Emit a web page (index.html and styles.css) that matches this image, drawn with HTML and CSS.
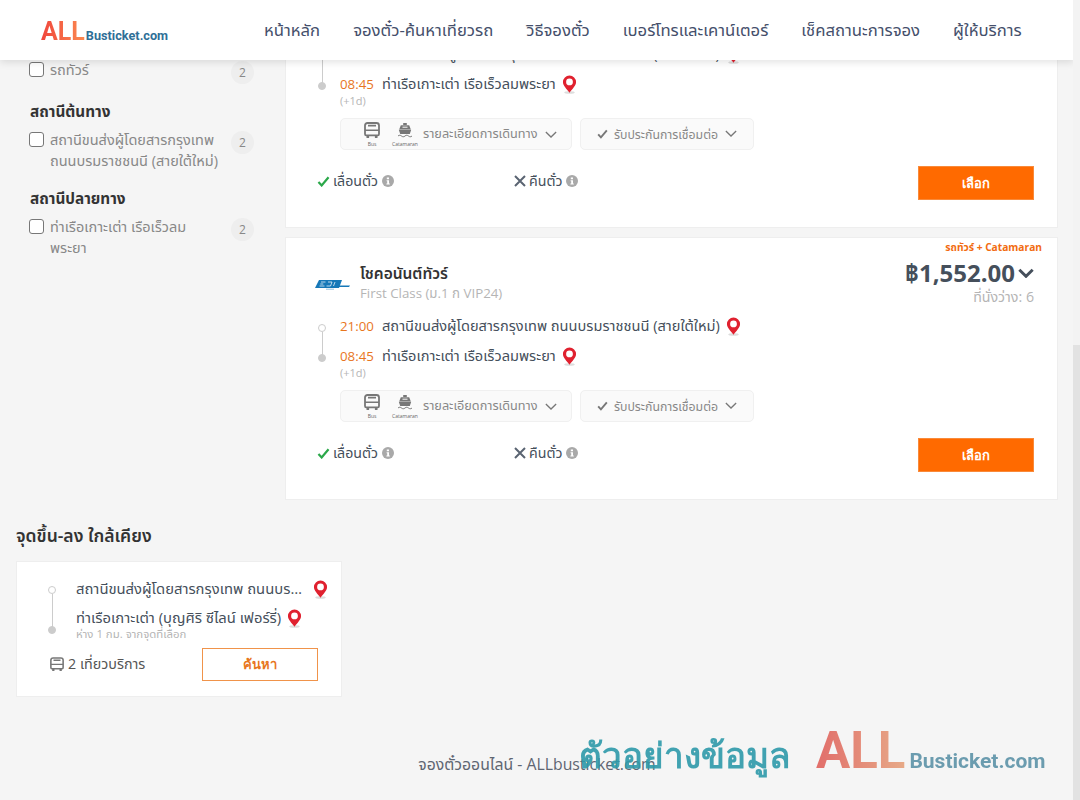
FILE: index.html
```html
<!DOCTYPE html>
<html lang="th">
<head>
<meta charset="utf-8">
<title>ALLBusticket</title>
<link rel="stylesheet" href="styles.css">
</head>
<body>
<svg class="defs" width="0" height="0">
  <symbol id="pin" viewBox="0 0 14 18">
    <ellipse cx="7" cy="16.6" rx="5" ry="1.2" fill="#ddd"/>
    <path d="M7 .5a6.2 6.2 0 0 0-6.2 6.2c0 3.6 3.6 6.6 6.2 10 2.6-3.4 6.2-6.4 6.2-10A6.2 6.2 0 0 0 7 .5z" fill="#e0212f"/>
    <circle cx="7" cy="6.6" r="3.2" fill="#fff"/>
  </symbol>
  <symbol id="bus" viewBox="0 0 16 17">
    <path d="M3.5 1h9C14 1 15 2 15 3.5V12c0 .8-.5 1.300-1.200 1.300H2.200C1.500 13.300 1 12.800 1 12V3.500C1 2 2 1 3.500 1z" fill="none" stroke="currentColor" stroke-width="1.800"/>
    <path d="M1 8.300h14M4 3.600h8" stroke="currentColor" stroke-width="1.600" fill="none"/>
    <path d="M2.500 13.300h2.600V16H2.500zM10.900 13.300h2.600V16h-2.600z" fill="currentColor"/>
  </symbol>
  <symbol id="boat" viewBox="0 0 16 17">
    <path d="M6.200 1h3.600v2H6.200z" fill="currentColor"/>
    <path d="M3.800 3.200h8.400l1.600 4.200H2.200z" fill="currentColor"/>
    <path d="M1.800 7.800h12.400l-1.400 4.200H3.200z" fill="currentColor"/>
    <path d="M5.500 5.200h5" stroke="#fafafa" stroke-width="1"/>
    <path d="M1 14c1.200-1 2.300-1 3.500 0s2.300 1 3.500 0 2.300-1 3.500 0 2.300 1 3.500 0" fill="none" stroke="currentColor" stroke-width="1"/>
  </symbol>
  <symbol id="chev" viewBox="0 0 14 8">
    <path d="M1 1l6 6 6-6" fill="none" stroke="currentColor" stroke-width="1.500"/>
  </symbol>
  <symbol id="chevb" viewBox="0 0 14 9">
    <path d="M1 1.500l6 6 6-6" fill="none" stroke="currentColor" stroke-width="2.600"/>
  </symbol>
  <symbol id="check" viewBox="0 0 14 12">
    <path d="M1.500 6.500l3.500 3.800 7.500-9" fill="none" stroke="currentColor" stroke-width="2.400"/>
  </symbol>
  <symbol id="cross" viewBox="0 0 12 12">
    <path d="M1 1l10 10M11 1L1 11" fill="none" stroke="currentColor" stroke-width="2"/>
  </symbol>
  <symbol id="info" viewBox="0 0 12 12">
    <circle cx="6" cy="6" r="6" fill="#a9a9a9"/>
    <path d="M4.800 2.500h2.200v1.800H4.800zM4.600 5.200h2.400v3.300h.8v1H4.400v-1h.8V6.200h-.6z" fill="#fff"/>
  </symbol>
  <symbol id="oper" viewBox="0 0 36 12">
    <path d="M5 1h23l-3 8H1z" fill="#1678b8"/>
    <path d="M7 3h4.500M6.300 5h3M5.500 7h5M14 3h4l-1.500 4h-4M21 3l-1.500 4" fill="none" stroke="#fff" stroke-width=".7"/>
    <path d="M25 6.500h11l-1 1.500H24.500z" fill="#1678b8"/>
    <path d="M12 10.200h8" stroke="#7fb4d6" stroke-width=".8"/>
  </symbol>
</svg>

<header class="topbar">
  <a class="logo"><span class="logo-all">ALL</span><span class="logo-rest">Busticket.com</span></a>
  <nav class="nav">
    <a>หน้าหลัก</a>
    <a>จองตั๋ว-ค้นหาเที่ยวรถ</a>
    <a>วิธีจองตั๋ว</a>
    <a>เบอร์โทรและเคาน์เตอร์</a>
    <a>เช็คสถานะการจอง</a>
    <a>ผู้ให้บริการ</a>
  </nav>
</header>

<div class="scrollbar"><div class="thumb"></div></div>

<main class="page">
  <div class="columns">
    <aside class="filters">
      <label class="filter"><span class="box"></span><span class="flabel">รถทัวร์</span><span class="count">2</span></label>
      <h4 class="ftitle">สถานีต้นทาง</h4>
      <label class="filter"><span class="box"></span><span class="flabel">สถานีขนส่งผู้โดยสารกรุงเทพ ถนนบรมราชชนนี (สายใต้ใหม่)</span><span class="count">2</span></label>
      <h4 class="ftitle">สถานีปลายทาง</h4>
      <label class="filter"><span class="box"></span><span class="flabel">ท่าเรือเกาะเต่า เรือเร็วลมพระยา</span><span class="count">2</span></label>
    </aside>

    <section class="results">
      <article class="card">
        <div class="tag">รถทัวร์ + Catamaran</div>
        <div class="card-head">
          <svg class="oplogo"><use href="#oper"/></svg>
          <div class="op"><div class="opname">โชคอนันต์ทัวร์</div><div class="opclass">First Class (ม.1 ก VIP24)</div></div>
          <div class="pricebox"><div class="price">฿1,552.00<svg class="pchev"><use href="#chevb"/></svg></div><div class="seats">ที่นั่งว่าง: 6</div></div>
        </div>
        <div class="route">
          <div class="stop"><span class="dot"></span><span class="time">21:00</span><span class="place">สถานีขนส่งผู้โดยสารกรุงเทพ ถนนบรมราชชนนี (สายใต้ใหม่)</span><svg class="pin"><use href="#pin"/></svg></div>
          <div class="stop last"><span class="dot full"></span><span class="time">08:45</span><span class="place">ท่าเรือเกาะเต่า เรือเร็วลมพระยา</span><svg class="pin"><use href="#pin"/></svg></div>
          <div class="nextday">(+1d)</div>
        </div>
        <div class="pills">
          <div class="pill wide">
            <span class="mode"><svg class="micon"><use href="#bus"/></svg><small>Bus</small></span>
            <span class="mode"><svg class="micon"><use href="#boat"/></svg><small>Catamaran</small></span>
            <span class="ptext">รายละเอียดการเดินทาง</span><svg class="chev"><use href="#chev"/></svg>
          </div>
          <div class="pill"><svg class="pcheck"><use href="#check"/></svg><span class="ptext low">รับประกันการเชื่อมต่อ</span><svg class="chev up"><use href="#chev"/></svg></div>
        </div>
        <div class="card-foot">
          <div class="policy"><svg class="yes"><use href="#check"/></svg>เลื่อนตั๋ว<svg class="info"><use href="#info"/></svg></div>
          <div class="policy"><svg class="no"><use href="#cross"/></svg>คืนตั๋ว<svg class="info"><use href="#info"/></svg></div>
          <button class="select">เลือก</button>
        </div>
      </article>

      <article class="card">
        <div class="tag">รถทัวร์ + Catamaran</div>
        <div class="card-head">
          <svg class="oplogo"><use href="#oper"/></svg>
          <div class="op"><div class="opname">โชคอนันต์ทัวร์</div><div class="opclass">First Class (ม.1 ก VIP24)</div></div>
          <div class="pricebox"><div class="price">฿1,552.00<svg class="pchev"><use href="#chevb"/></svg></div><div class="seats">ที่นั่งว่าง: 6</div></div>
        </div>
        <div class="route">
          <div class="stop"><span class="dot"></span><span class="time">21:00</span><span class="place">สถานีขนส่งผู้โดยสารกรุงเทพ ถนนบรมราชชนนี (สายใต้ใหม่)</span><svg class="pin"><use href="#pin"/></svg></div>
          <div class="stop last"><span class="dot full"></span><span class="time">08:45</span><span class="place">ท่าเรือเกาะเต่า เรือเร็วลมพระยา</span><svg class="pin"><use href="#pin"/></svg></div>
          <div class="nextday">(+1d)</div>
        </div>
        <div class="pills">
          <div class="pill wide">
            <span class="mode"><svg class="micon"><use href="#bus"/></svg><small>Bus</small></span>
            <span class="mode"><svg class="micon"><use href="#boat"/></svg><small>Catamaran</small></span>
            <span class="ptext">รายละเอียดการเดินทาง</span><svg class="chev"><use href="#chev"/></svg>
          </div>
          <div class="pill"><svg class="pcheck"><use href="#check"/></svg><span class="ptext low">รับประกันการเชื่อมต่อ</span><svg class="chev up"><use href="#chev"/></svg></div>
        </div>
        <div class="card-foot">
          <div class="policy"><svg class="yes"><use href="#check"/></svg>เลื่อนตั๋ว<svg class="info"><use href="#info"/></svg></div>
          <div class="policy"><svg class="no"><use href="#cross"/></svg>คืนตั๋ว<svg class="info"><use href="#info"/></svg></div>
          <button class="select">เลือก</button>
        </div>
      </article>
    </section>
  </div>

  <section class="nearby">
    <h3 class="nearby-title">จุดขึ้น-ลง ใกล้เคียง</h3>
    <div class="ncard">
      <div class="nroute">
        <div class="nstop"><span class="dot"></span><span class="nplace clip">สถานีขนส่งผู้โดยสารกรุงเทพ ถนนบรมราชชนนี (สายใต้ใหม่)</span><svg class="pin"><use href="#pin"/></svg></div>
        <div class="nstop lastn"><span class="dot full"></span><span class="nplace">ท่าเรือเกาะเต่า (บุญศิริ ซีไลน์ เฟอร์รี่)</span><svg class="pin"><use href="#pin"/></svg></div>
        <div class="ndist">ห่าง 1 กม. จากจุดที่เลือก</div>
      </div>
      <div class="nfoot">
        <span class="trips"><svg class="tbus"><use href="#bus"/></svg>2 เที่ยวบริการ</span>
        <button class="search">ค้นหา</button>
      </div>
    </div>
  </section>

  <footer class="foot">จองตั๋วออนไลน์ - ALLbusticket.com</footer>
</main>

<div class="watermark"><span class="wm-text">ตัวอย่างข้อมูล</span><span class="wm-all">ALL</span><span class="wm-rest">Busticket.com</span></div>
</body>
</html>
```

FILE: styles.css
```css
* { box-sizing: border-box; }
html, body { margin: 0; height: 800px; overflow: hidden; }
body {
  background: #f5f5f5;
  font-family: "Open Sans", "Noto Sans", "Noto Sans Thai", "DejaVu Sans", sans-serif;
  font-size: 14px;
  color: #454f5b;
  position: relative;
}
.defs { position: absolute; }

.topbar {
  position: absolute; top: 0; left: 0; z-index: 5;
  width: 1074px; height: 60px;
  background: #fff;
  box-shadow: 0 2px 8px rgba(0,0,0,.12);
  display: flex; align-items: center;
  padding: 1px 0 0 41px;
}
.logo { display: flex; align-items: baseline; width: 223px; font-family: Roboto, sans-serif; font-weight: 700; position: relative; top: 1px; }
.logo-all { font-size: 25px; background: linear-gradient(90deg, #f0463c, #fb8a50); -webkit-background-clip: text; background-clip: text; color: transparent; }
.logo-rest { font-size: 12.700px; margin-left: 1px; color: #2f6f97; }
.nav { display: flex; gap: 33px; font-size: 16.700px; color: #454f6b; }

.scrollbar { position: absolute; top: 0; right: 0; width: 7px; height: 800px; background: #f3f3f3; z-index: 6; }
.thumb { margin-top: 345px; height: 455px; background: #e2e2e2; }

.page { margin-top: -35px; }
.columns { display: flex; align-items: flex-start; height: 535px; }

.filters { width: 285px; padding: 96px 31px 0 29px; }
.filter { display: flex; align-items: flex-start; margin-bottom: 13px; }
.box { flex: none; width: 15px; height: 15px; border: 1.500px solid #777; border-radius: 3px; margin-top: 1px; background: #fff; }
.flabel { flex: none; width: 172px; margin: -2px 9px 0 6px; font-size: 14.500px; line-height: 21px; color: #888; }
.count { flex: none; width: 23px; height: 23px; border-radius: 50%; background: #eee; font-size: 12px; text-align: center; line-height: 23px; color: #888; }
.ftitle { margin: 17px 0 10px 1px; font-size: 15.300px; line-height: 20px; font-weight: 700; color: #333; }

.results { width: 773px; display: flex; flex-direction: column; gap: 9px; }
.card { position: relative; height: 263px; background: #fff; border: 1px solid #eee; padding: 0 23px 0 28px; }
.tag { position: absolute; top: 2px; right: 15px; font-size: 10.200px; font-weight: 700; color: #f26b10; line-height: 14px; }

.card-head { display: flex; align-items: center; height: 48px; margin-top: 21px; }
.oplogo { width: 36px; height: 12px; flex: none; margin-top: 4px; }
.op { margin-left: 10px; flex: 1; }
.opname { font-size: 15.500px; font-weight: 600; color: #333; line-height: 20px; }
.opclass { font-size: 13.300px; color: #b5b5b5; line-height: 20px; }
.pricebox { text-align: right; position: relative; top: -2px; }
.price { font-size: 24px; font-weight: 700; color: #454f5b; line-height: 32px; display: flex; align-items: center; }
.pchev { width: 16px; height: 10px; margin-left: 3px; color: #454f5b; }
.seats { font-size: 14.200px; color: #b5b5b5; line-height: 16px; }

.route { margin-top: 4px; }
.stop { display: flex; align-items: center; height: 30px; position: relative; padding-left: 26px; }
.dot { position: absolute; left: 4px; top: 13px; width: 8px; height: 8px; border-radius: 50%; background: #fff; border: 1px solid #ccc; z-index: 1; }
.dot.full { background: #ccc; }
.stop:not(.last) .dot::after { content: ""; position: absolute; left: 2.500px; top: 7px; width: 1px; height: 24px; background: #ccc; }
.time { color: #e8761e; font-size: 13.300px; width: 42px; }
.place { font-size: 14.600px; color: #454f5b; }
.pin { width: 15px; height: 19px; margin-left: 6px; flex: none; }
.nextday { font-size: 11px; color: #b5b5b5; padding-left: 26px; line-height: 14px; margin-top: -5px; }

.pills { display: flex; gap: 8px; margin: 10px 0 0 26px; }
.pill { display: flex; align-items: center; height: 32px; width: 174px; background: #fafafa; border: 1px solid #f0f0f0; border-radius: 5px; padding-left: 16px; color: #777; }
.pill.wide { width: 232px; padding-left: 16px; }
.mode { display: flex; flex-direction: column; align-items: center; width: 30px; line-height: 6px; }
.mode + .mode { margin-left: 3px; margin-right: 3px; }
.micon { width: 16px; height: 17px; color: #777; }
.mode small { font-size: 5px; color: #666; white-space: nowrap; margin-top: 2px; }
.ptext { font-size: 12.700px; color: #888; }
.ptext.low { position: relative; top: 1px; margin-left: 6px; font-size: 12.300px; }
.chev { width: 12px; height: 7px; margin-left: 7px; color: #777; }
.chev.up { position: relative; top: -1px; }
.pcheck { width: 11px; height: 10px; color: #777; }

.card-foot { display: flex; align-items: center; margin: 16px 0 0 3px; }
.policy { display: flex; align-items: center; font-size: 14.200px; color: #454f5b; width: 197px; margin-bottom: 4px; }
.yes { width: 13px; height: 11px; color: #2ba84a; margin-right: 3px; }
.no { width: 12px; height: 12px; color: #5a6472; margin-right: 3px; }
.info { width: 12px; height: 12px; margin-left: 4px; }
.select { margin-left: auto; width: 116px; height: 34px; background: #ff6a00; color: #fff; border: 1px solid #f98a3a; font: 600 13px "Open Sans", "Noto Sans", sans-serif; }

.nearby { padding: 23px 0 0 16px; }
.nearby-title { margin: 0; font-size: 17.500px; font-weight: 600; line-height: 24px; color: #333; }
.ncard { width: 326px; height: 136px; margin-top: 14px; background: #fff; border: 1px solid #eee; padding: 13px 23px 0 31px; }
.nroute { position: relative; margin-right: -9px; }
.nstop { display: flex; align-items: center; height: 29px; padding-left: 28px; position: relative; }
.nstop .dot { left: 0; top: 11px; }
.nstop:not(.lastn) .dot::after { content: ""; position: absolute; left: 2.500px; top: 7px; width: 1px; height: 36px; background: #ccc; }
.nstop.lastn .dot { top: 22px; }
.nplace { font-size: 14.800px; color: #454f5b; }
.clip { white-space: nowrap; overflow: hidden; text-overflow: ellipsis; width: 231px; flex: none; }
.nstop .pin { margin-left: 6px; }
.ndist { font-size: 11.400px; color: #b5b5b5; padding-left: 28px; line-height: 11px; margin-top: -5px; }
.nfoot { display: flex; align-items: center; justify-content: space-between; margin: 9px 0 0 2px; }
.trips { display: flex; align-items: center; font-size: 14.300px; color: #555; }
.tbus { width: 14px; height: 15px; margin-right: 4px; color: #777; }
.search { width: 116px; height: 33px; background: #fff; border: 1px solid #f0934a; color: #e8761e; font: 600 13px "Open Sans", "Noto Sans", sans-serif; }

.foot { width: 1074px; margin-top: 55px; text-align: center; font-size: 15.800px; color: #5f6672; line-height: 24px; }

.watermark { position: absolute; left: 579px; top: 721px; z-index: 4; display: flex; align-items: baseline; opacity: .9; line-height: 60px; font-family: Roboto, sans-serif; font-weight: 700; }
.wm-text { font-size: 35px; color: #2e9aaa; font-family: "Open Sans", "Noto Sans", sans-serif; margin-right: 26px; }
.wm-all { font-size: 51px; background: linear-gradient(90deg, #e0605c, #e6a27c); -webkit-background-clip: text; background-clip: text; color: transparent; }
.wm-rest { font-size: 21px; margin-left: 4px; color: #5d93a8; }
```
